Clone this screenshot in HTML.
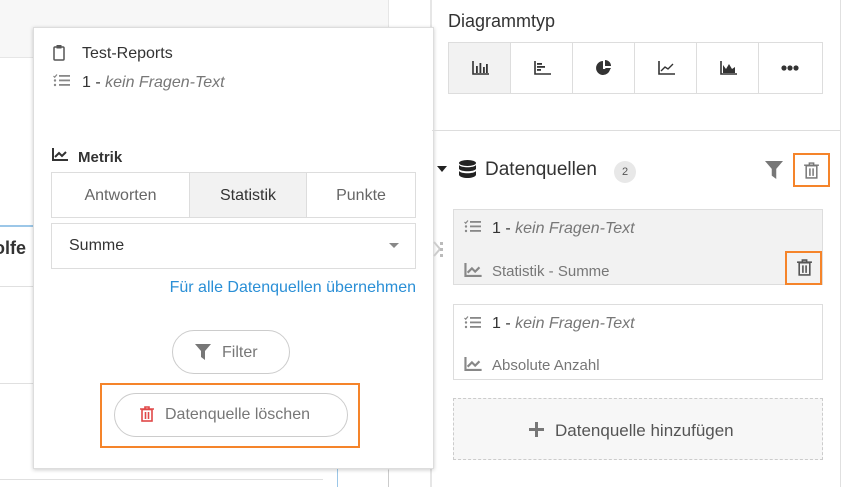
<!DOCTYPE html>
<html><head><meta charset="utf-8"><style>
*{box-sizing:border-box;margin:0;padding:0}
body{width:844px;height:487px;overflow:hidden;background:#fff;font-family:"Liberation Sans",sans-serif;color:#333;position:relative}
.a{position:absolute}
.t{white-space:nowrap;margin-top:2px}
i{color:#777}
</style></head><body>
<div class="a" style="left:0;top:0;width:388px;height:58px;background:#f7f7f7;border-bottom:1px solid #e6e6e6"></div>
<div class="a" style="left:388px;top:0;width:1px;height:487px;background:#e6e6e6"></div>
<div class="a" style="left:430px;top:0;width:2px;height:487px;background:#e6e6e6"></div>
<div class="a" style="left:0;top:225px;width:33px;height:2px;background:#9cc7e8"></div>
<div class="a t" style="left:-6px;top:236px;font-weight:bold;font-size:18px;color:#333">olfe</div>
<div class="a" style="left:0;top:286px;width:33px;height:1px;background:#e0e0e0"></div>
<div class="a" style="left:0;top:383px;width:33px;height:1px;background:#e0e0e0"></div>
<div class="a" style="left:0;top:479px;width:323px;height:1px;background:#e0e0e0"></div>
<div class="a" style="left:337px;top:440px;width:1px;height:47px;background:#9cc7e8"></div>
<div class="a" style="left:388px;top:470px;width:1px;height:17px;background:#ccc"></div>
<div class="a" style="left:840px;top:0;width:1px;height:487px;background:#e0e0e0"></div>

<div class="a" style="left:33px;top:27px;width:401px;height:442px;background:#fff;border:1px solid #ddd;box-shadow:0 1px 4px rgba(0,0,0,.2)"></div>
<svg class="a" style="left:53px;top:44px" width="12" height="17" viewBox="0 0 12 17"><rect x="1" y="3" width="10" height="13" fill="none" stroke="#555" stroke-width="1.5" rx="1"/><rect x="3.5" y="1" width="5" height="3.5" fill="#555"/></svg>
<div class="a t" style="left:82px;top:43px;font-size:16px;color:#333">Test-Reports</div>
<svg class="a" style="left:53px;top:74px" width="18" height="13" viewBox="0 0 18 13"><g fill="#888"><rect x="6" y="1" width="11" height="1.8"/><rect x="6" y="5.5" width="11" height="1.8"/><rect x="6" y="10" width="11" height="1.8"/><circle cx="2" cy="6.5" r="1.2"/><circle cx="2" cy="11" r="1.2"/><path d="M0.5 2l1.2 1.2L4 0.5" stroke="#888" fill="none" stroke-width="1.2"/></g></svg>
<div class="a t" style="left:82px;top:72px;font-size:16px;color:#333">1 - <i>kein Fragen-Text</i></div>
<svg class="a" style="left:52px;top:148px" width="16" height="13" viewBox="0 0 16 13"><path d="M1 0v12h15" stroke="#333" stroke-width="2" fill="none"/><path d="M3 9l4-4 3 3 4-4" stroke="#333" stroke-width="2" fill="none"/></svg>
<div class="a t" style="left:78px;top:147px;font-size:15px;color:#333;font-weight:600">Metrik</div>
<div class="a" style="left:51px;top:172px;width:365px;height:46px;border:1px solid #ddd;display:flex;font-size:16px">
<div style="width:137px;text-align:center;line-height:46px;color:#666">Antworten</div>
<div style="width:118px;text-align:center;line-height:46px;color:#333;background:#f2f2f2;border-left:1px solid #ddd;border-right:1px solid #ddd">Statistik</div>
<div style="flex:1;text-align:center;line-height:46px;color:#666">Punkte</div></div>
<div class="a" style="left:51px;top:223px;width:365px;height:46px;border:1px solid #ddd"></div>
<div class="a t" style="left:69px;top:235px;font-size:16px;color:#333">Summe</div>
<div class="a" style="left:389px;top:243px;border-left:5px solid transparent;border-right:5px solid transparent;border-top:5px solid #888"></div>
<div class="a t" style="right:428px;top:277px;font-size:16px;color:#2a8fd6">Für alle Datenquellen übernehmen</div>
<div class="a" style="left:172px;top:330px;width:118px;height:44px;border:1px solid #ccc;border-radius:22px"></div>
<svg class="a" style="left:195px;top:344px" width="16" height="16" viewBox="0 0 16 16"><path d="M0 0h16l-6 7v9l-4-3V7z" fill="#777"/></svg>
<div class="a t" style="left:222px;top:342px;font-size:16px;color:#777">Filter</div>
<div class="a" style="left:100px;top:383px;width:260px;height:65px;border:2px solid #f5842a"></div>
<div class="a" style="left:114px;top:393px;width:234px;height:44px;border:1px solid #ccc;border-radius:22px"></div>
<svg class="a" style="left:140px;top:406px" width="14" height="16" viewBox="0 0 14 16"><g fill="none" stroke="#e04848" stroke-width="1.6"><path d="M0 3h14M5 3V1h4v2"/><rect x="2" y="3.5" width="10" height="11.5"/><path d="M5.5 6v7M8.5 6v7"/></g></svg>
<div class="a t" style="left:165px;top:404px;font-size:16px;color:#777">Datenquelle löschen</div>
<svg class="a" style="left:432px;top:240px" width="14" height="18" viewBox="0 0 14 18"><path d="M2 2l6 7-6 7" stroke="#ccc" stroke-width="2" fill="none"/><g fill="#bbb"><rect x="8" y="2" width="3" height="3"/><rect x="8" y="8" width="3" height="3"/><rect x="8" y="14" width="3" height="3"/></g></svg>

<div class="a t" style="left:448px;top:9px;font-size:18px;color:#333">Diagrammtyp</div>
<div class="a" style="left:448px;top:42px;width:375px;height:52px;border:1px solid #ddd;display:flex">
<div style="width:62px;background:#f2f2f2;border-right:1px solid #ddd;position:relative"><svg style="position:absolute;left:23px;top:18px" width="17" height="14" viewBox="0 0 17 14"><path d="M1 0v13h16" stroke="#333" stroke-width="1.6" fill="none"/><g fill="#333"><rect x="4" y="5" width="1.8" height="7"/><rect x="7.5" y="2" width="1.8" height="10"/><rect x="11" y="6" width="1.8" height="6"/><rect x="14" y="3" width="1.8" height="9"/></g></svg></div>
<div style="width:62px;border-right:1px solid #ddd;position:relative"><svg style="position:absolute;left:23px;top:18px" width="17" height="14" viewBox="0 0 17 14"><path d="M1 0v13h16" stroke="#333" stroke-width="1.6" fill="none"/><g fill="#333"><rect x="3" y="2" width="5" height="1.8"/><rect x="3" y="5" width="8" height="1.8"/><rect x="3" y="8" width="4" height="1.8"/></g></svg></div>
<div style="width:62px;border-right:1px solid #ddd;position:relative"><svg style="position:absolute;left:23px;top:17px" width="16" height="16" viewBox="0 0 16 16"><path d="M7 1A7 7 0 1 0 14 9H7z" fill="#333"/><path d="M9 0v6h6A6 6 0 0 0 9 0z" fill="#333"/><path d="M9 8h6l-3 5z" fill="#333"/></svg></div>
<div style="width:62px;border-right:1px solid #ddd;position:relative"><svg style="position:absolute;left:23px;top:18px" width="17" height="14" viewBox="0 0 17 14"><path d="M1 0v13h16" stroke="#333" stroke-width="1.6" fill="none"/><path d="M3 10l4-4 3 2 5-5" stroke="#333" stroke-width="1.4" fill="none"/></svg></div>
<div style="width:62px;border-right:1px solid #ddd;position:relative"><svg style="position:absolute;left:23px;top:18px" width="17" height="14" viewBox="0 0 17 14"><path d="M1 0v13h16" stroke="#333" stroke-width="1.6" fill="none"/><path d="M3 12V4l3 4 3-5 3 5 3-2v6z" fill="#333"/></svg></div>
<div style="flex:1;position:relative"><svg style="position:absolute;left:22px;top:22px" width="18" height="6"><circle cx="3" cy="3" r="2.6" fill="#333"/><circle cx="9" cy="3" r="2.6" fill="#333"/><circle cx="15" cy="3" r="2.6" fill="#333"/></svg></div>
</div>
<div class="a" style="left:432px;top:130px;width:408px;height:1px;background:#ddd"></div>
<div class="a" style="left:437px;top:166px;border-left:5px solid transparent;border-right:5px solid transparent;border-top:6px solid #222"></div>
<svg class="a" style="left:459px;top:160px" width="17" height="19" viewBox="0 0 17 19"><g fill="#222"><ellipse cx="8.5" cy="3" rx="8.5" ry="3"/><path d="M0 5c2 3 15 3 17 0v4c-2 3-15 3-17 0z"/><path d="M0 11c2 3 15 3 17 0v4c-2 4-15 4-17 0z"/></g></svg>
<div class="a t" style="left:485px;top:157px;font-size:19px;color:#333">Datenquellen</div>
<div class="a" style="left:614px;top:161px;width:22px;height:22px;border-radius:11px;background:#e8e8e8;font-size:11px;text-align:center;line-height:22px;color:#555">2</div>
<svg class="a" style="left:765px;top:161px" width="18" height="18" viewBox="0 0 16 16"><path d="M0 0h16l-6 7v9l-4-3V7z" fill="#777"/></svg>
<div class="a" style="left:793px;top:153px;width:37px;height:34px;border:2px solid #f5842a"></div>
<svg class="a" style="left:804px;top:162px" width="15" height="17" viewBox="0 0 14 16"><g fill="none" stroke="#777" stroke-width="1.4"><path d="M0 3h14M5 3V1h4v2"/><rect x="2" y="3.5" width="10" height="11.5"/><path d="M5.5 6v7M8.5 6v7"/></g></svg>

<div class="a" style="left:453px;top:209px;width:370px;height:76px;background:#f2f2f2;border:1px solid #ddd"></div>
<svg class="a" style="left:464px;top:220px" width="18" height="13" viewBox="0 0 18 13"><g fill="#888"><rect x="6" y="1" width="11" height="1.8"/><rect x="6" y="5.5" width="11" height="1.8"/><rect x="6" y="10" width="11" height="1.8"/><circle cx="2" cy="6.5" r="1.2"/><circle cx="2" cy="11" r="1.2"/><path d="M0.5 2l1.2 1.2L4 0.5" stroke="#888" fill="none" stroke-width="1.2"/></g></svg>
<div class="a t" style="left:492px;top:218px;font-size:16px;color:#333">1 - <i>kein Fragen-Text</i></div>
<svg class="a" style="left:464px;top:263px" width="18" height="14" viewBox="0 0 16 13"><path d="M1 0v12h15" stroke="#888" stroke-width="2" fill="none"/><path d="M3 9l4-4 3 3 4-4" stroke="#888" stroke-width="2" fill="none"/></svg>
<div class="a t" style="left:492px;top:261px;font-size:15px;color:#777">Statistik - Summe</div>
<div class="a" style="left:785px;top:251px;width:37px;height:34px;border:2px solid #f5842a"></div>
<svg class="a" style="left:797px;top:259px" width="15" height="17" viewBox="0 0 14 16"><g fill="none" stroke="#555" stroke-width="1.5"><path d="M0 3h14M5 3V1h4v2"/><rect x="2" y="3.5" width="10" height="11.5"/><path d="M5.5 6v7M8.5 6v7"/></g></svg>

<div class="a" style="left:453px;top:304px;width:370px;height:76px;background:#fff;border:1px solid #ddd"></div>
<svg class="a" style="left:464px;top:316px" width="18" height="13" viewBox="0 0 18 13"><g fill="#888"><rect x="6" y="1" width="11" height="1.8"/><rect x="6" y="5.5" width="11" height="1.8"/><rect x="6" y="10" width="11" height="1.8"/><circle cx="2" cy="6.5" r="1.2"/><circle cx="2" cy="11" r="1.2"/><path d="M0.5 2l1.2 1.2L4 0.5" stroke="#888" fill="none" stroke-width="1.2"/></g></svg>
<div class="a t" style="left:492px;top:313px;font-size:16px;color:#333">1 - <i>kein Fragen-Text</i></div>
<svg class="a" style="left:464px;top:357px" width="18" height="14" viewBox="0 0 16 13"><path d="M1 0v12h15" stroke="#888" stroke-width="2" fill="none"/><path d="M3 9l4-4 3 3 4-4" stroke="#888" stroke-width="2" fill="none"/></svg>
<div class="a t" style="left:492px;top:355px;font-size:15px;color:#777">Absolute Anzahl</div>

<div class="a" style="left:453px;top:398px;width:370px;height:62px;background:#f7f7f7;border:1px dashed #ccc"></div>
<div class="a" style="left:529px;top:428px;width:15px;height:3px;background:#777"></div>
<div class="a" style="left:535px;top:422px;width:3px;height:15px;background:#777"></div>
<div class="a t" style="left:555px;top:419px;font-size:17px;color:#555">Datenquelle hinzufügen</div>
</body></html>
